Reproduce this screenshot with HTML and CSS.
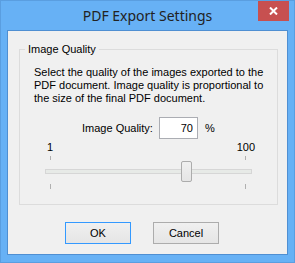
FILE: index.html
```html
<!DOCTYPE html>
<html lang="en">
<head>
    <meta charset="UTF-8">
    <title>PDF Export Settings</title>
    <link rel="stylesheet" href="styles.css">
</head>
<body>
    <div class="window">
        <div class="titlebar">
            <span class="title">PDF Export Settings</span>
            <button class="close" title="Close">
                <svg width="9" height="8" viewBox="0 0 9 8"><path d="M1 0.5 L8 7.5 M8 0.5 L1 7.5" stroke="#fff" stroke-width="2"/></svg>
            </button>
        </div>
        <div class="client">
            <div class="group">
                <span class="group-title">Image Quality</span>
                <p class="desc">Select the quality of the images exported to the PDF document. Image quality is proportional to the size of the final PDF document.</p>
                <div class="quality-row">
                    <label for="quality">Image Quality:</label>
                    <input type="text" id="quality" value="70">
                    <span class="unit">%</span>
                </div>
                <div class="slider">
                    <div class="scale"><span>1</span><span>100</span></div>
                    <div class="ticks"><i></i><i></i></div>
                    <div class="rail">
                        <div class="track"></div>
                        <div class="thumb" style="left: 136px"></div>
                    </div>
                    <div class="ticks bottom"><i></i><i></i></div>
                </div>
            </div>
            <div class="buttons">
                <button class="btn default">OK</button>
                <button class="btn">Cancel</button>
            </div>
        </div>
    </div>
</body>
</html>
```

FILE: styles.css
```css
body {
    margin: 0;
    font-family: "Liberation Sans", Arial, sans-serif;
    font-size: 11px;
    color: #000;
}
.window {
    width: 295px;
    height: 263px;
    box-sizing: border-box;
    background: #67b1f5;
    border: 1px solid #5a9ee0;
    padding: 0 6px 7px;
    display: flex;
    flex-direction: column;
}
.titlebar {
    height: 29px;
    position: relative;
    text-align: center;
}
.title {
    display: block;
    font-family: "Noto Sans", sans-serif;
    font-size: 14px;
    line-height: 20px;
    padding-top: 5px;
    color: #222;
}
.close {
    position: absolute;
    top: 0;
    right: -1px;
    width: 31px;
    height: 20px;
    border: none;
    padding: 0;
    background: #c75050;
    display: flex;
    align-items: center;
    justify-content: center;
}
.client {
    flex: 1;
    background: #f0f0f0;
    border: 1px solid #4f8fd2;
}
.group {
    position: relative;
    margin: 18px 9px 0 11px;
    border: 1px solid #dcdcdc;
    padding: 0 0 15px;
}
.group-title {
    position: absolute;
    top: -7px;
    left: 5px;
    padding: 0 3px;
    line-height: 13px;
    background: #f0f0f0;
}
.desc {
    margin: 16px 0 0 14px;
    width: 232px;
    line-height: 13px;
}
.quality-row {
    display: flex;
    align-items: center;
    margin-top: 12px;
    padding-left: 62px;
}
.quality-row label {
    margin-right: 6px;
}
.quality-row input {
    width: 39px;
    height: 22px;
    box-sizing: border-box;
    border: 1px solid #abadb3;
    padding: 0 4px 0 0;
    text-align: right;
    font: inherit;
    background: #fff;
}
.unit {
    margin-left: 7px;
}
.scale {
    display: flex;
    justify-content: space-between;
    margin-top: 2px;
    padding: 0 22px 0 27px;
    line-height: 13px;
}
.ticks {
    display: flex;
    justify-content: space-between;
    margin-top: 2px;
    padding: 0 31px 0 30px;
    height: 4px;
}
.ticks i {
    width: 1px;
    background: #b0b0b0;
}
.ticks.bottom {
    height: 5px;
}
.rail {
    position: relative;
    margin: 1px 0 0 25px;
    width: 207px;
    height: 21px;
    display: flex;
    align-items: center;
}
.track {
    width: 100%;
    height: 5px;
    box-sizing: border-box;
    border: 1px solid #d6d6d6;
    background: #e7eae7;
}
.thumb {
    position: absolute;
    top: 0;
    width: 11px;
    height: 21px;
    box-sizing: border-box;
    border: 1px solid #acacac;
    border-radius: 2px;
    background: linear-gradient(#f0f0f0, #e5e5e5);
}
.buttons {
    display: flex;
    gap: 22px;
    margin-top: 17px;
    padding-left: 57px;
}
.btn {
    width: 66px;
    height: 22px;
    border: 1px solid #acacac;
    background: linear-gradient(#f0f0f0, #e5e5e5);
    font: inherit;
    color: #000;
    padding: 0;
}
.btn.default {
    border-color: #3399ff;
}
```
